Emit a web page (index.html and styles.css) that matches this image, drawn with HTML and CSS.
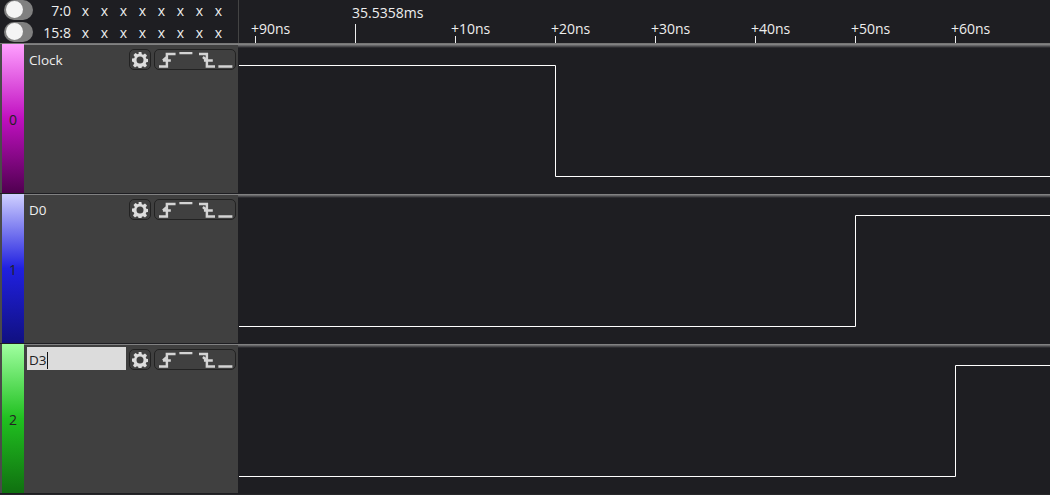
FILE: index.html
```html
<!DOCTYPE html>
<html lang="en">
<head>
  <meta charset="UTF-8">
  <title>Logic analyzer</title>
  <link rel="stylesheet" href="styles.css">
</head>
<body>
  <svg class="defs">
    <defs>
      <symbol id="gear" viewBox="0 0 16 16">
        <path fill-rule="evenodd" d="M6.600 0h2.800l.4 2.200 1.300.6 1.900-1.300 2 2-1.300 1.900.6 1.300 2.200.4v2.800l-2.200.4-.6 1.300 1.300 1.900-2 2-1.900-1.300-1.300.6-.4 2.200H6.600l-.4-2.200-1.300-.6-1.900 1.300-2-2 1.300-1.900-.6-1.300L0 9.400V6.600l2.200-.4.6-1.300L1.500 3l2-2 1.900 1.300 1.300-.6zM8 4.500a3.500 3.500 0 1 0 0 7 3.500 3.500 0 0 0 0-7z"/>
      </symbol>
      <symbol id="rise" viewBox="0 0 17 16">
        <path d="M0 14.500h8V2h9M4 8.500h8M4 8.500l4-3.500"/>
      </symbol>
      <symbol id="high" viewBox="0 0 16 16">
        <path d="M0 1h13"/>
      </symbol>
      <symbol id="fall" viewBox="0 0 17 16">
        <path d="M0 2h8v12.500h9M5 8.500h9M4 5l4 3.500"/>
      </symbol>
      <symbol id="low" viewBox="0 0 16 16">
        <path d="M0 14.500h14"/>
      </symbol>
    </defs>
  </svg>

  <header class="top">
    <div class="bytes">
      <div class="byte-row">
        <span class="toggle"></span>
        <span class="byte-name">7:0</span>
        <span class="bits"><i>x</i><i>x</i><i>x</i><i>x</i><i>x</i><i>x</i><i>x</i><i>x</i></span>
      </div>
      <div class="byte-row">
        <span class="toggle"></span>
        <span class="byte-name">15:8</span>
        <span class="bits"><i>x</i><i>x</i><i>x</i><i>x</i><i>x</i><i>x</i><i>x</i><i>x</i></span>
      </div>
    </div>
    <div class="ruler">
      <div class="tick"><span>+90ns</span></div>
      <div class="tick major"><span>35.5358ms</span></div>
      <div class="tick"><span>+10ns</span></div>
      <div class="tick"><span>+20ns</span></div>
      <div class="tick"><span>+30ns</span></div>
      <div class="tick"><span>+40ns</span></div>
      <div class="tick"><span>+50ns</span></div>
      <div class="tick"><span>+60ns</span></div>
    </div>
  </header>

  <section class="track">
    <div class="strip pink">0</div>
    <div class="info">
      <div class="name">Clock</div>
      <div class="btn gear"><svg><use href="#gear"/></svg></div>
      <div class="btn edges">
        <svg><use href="#rise"/></svg><svg><use href="#high"/></svg><svg><use href="#fall"/></svg><svg><use href="#low"/></svg>
      </div>
    </div>
    <svg class="wave" viewBox="0 0 811 147"><path d="M0 18.500H316.500V129.500H811"/></svg>
  </section>

  <section class="track">
    <div class="strip blue">1</div>
    <div class="info">
      <div class="name">D0</div>
      <div class="btn gear"><svg><use href="#gear"/></svg></div>
      <div class="btn edges">
        <svg><use href="#rise"/></svg><svg><use href="#high"/></svg><svg><use href="#fall"/></svg><svg><use href="#low"/></svg>
      </div>
    </div>
    <svg class="wave" viewBox="0 0 811 147"><path d="M0 129.500H616.500V18.500H811"/></svg>
  </section>

  <section class="track">
    <div class="strip green">2</div>
    <div class="info">
      <div class="name editing">D3<b class="caret"></b></div>
      <div class="btn gear"><svg><use href="#gear"/></svg></div>
      <div class="btn edges">
        <svg><use href="#rise"/></svg><svg><use href="#high"/></svg><svg><use href="#fall"/></svg><svg><use href="#low"/></svg>
      </div>
    </div>
    <svg class="wave" viewBox="0 0 811 147"><path d="M0 129.500H716.500V18.500H811"/></svg>
  </section>
</body>
</html>
```

FILE: styles.css
```css
html, body {
  margin: 0;
  height: 100%;
  overflow: hidden;
}

body {
  background-color: #27272a;
  color: #eee;
  font-family: "Open Sans", sans-serif;
  font-size: 14px;
}

.defs {
  display: none;
}

.top {
  display: flex;
  box-sizing: border-box;
  height: 44px;
  border-bottom: 1px solid #777;
  background-color: #1e1e22;
}

.bytes {
  flex: none;
  display: flex;
  flex-direction: column;
  gap: 2px;
  width: 234px;
  padding-left: 4px;
  border-right: 1px solid #444;
}

.byte-row {
  display: flex;
  align-items: center;
  height: 20px;
}

.toggle {
  position: relative;
  width: 29px;
  height: 20px;
  border-radius: 10px;
  background-color: #808080;
}

.toggle::after {
  content: "";
  position: absolute;
  left: 2px;
  top: 1px;
  width: 17px;
  height: 17px;
  border-radius: 50%;
  background-color: #f4f4f4;
}

.byte-name {
  width: 38px;
  text-align: right;
}

.bits {
  display: flex;
  margin-left: 5px;
}

.bits i {
  width: 19px;
  text-align: center;
  font-style: normal;
}

.ruler {
  display: flex;
  padding-left: 16px;
  overflow: hidden;
}

.tick {
  position: relative;
  flex: none;
  width: 100px;
  box-sizing: border-box;
  border-left: 1px solid #eee;
  height: 7px;
  margin-top: 36px;
}

.tick span {
  position: absolute;
  left: -5px;
  bottom: 5px;
  white-space: nowrap;
}

.tick.major {
  height: 19px;
  margin-top: 24px;
}

.tick.major span {
  left: -4px;
  bottom: 21px;
}

.track {
  display: flex;
  height: 150px;
  background: #1e1e22 linear-gradient(#909090, #1e1e22 4px) no-repeat;
}

.strip {
  flex: none;
  display: flex;
  align-items: center;
  justify-content: center;
  width: 22px;
  padding-top: 2px;
  box-sizing: content-box;
  margin-bottom: 1px;
  border-left: 2px solid #4a4a4a;
  color: #222;
}

.pink { background: linear-gradient(#ffa0ff, #c010c0 50%, #500050); }
.blue { background: linear-gradient(#d0d0ff, #2020e0 50%, #101080); }
.green { background: linear-gradient(#a0ffa0, #20c020 50%, #107010); }

.info {
  flex: none;
  display: flex;
  align-items: flex-start;
  width: 214px;
  margin: 1px 0;
  background-color: #404040;
}

.name {
  flex: none;
  width: 99px;
  height: 23px;
  margin: 2px 3px 0;
  padding: 3px 0 0 2px;
  box-sizing: border-box;
  font-size: 13.5px;
  line-height: 20px;
}

.editing {
  background-color: #dcdcdc;
  color: #222;
}

.caret {
  display: inline-block;
  width: 1px;
  height: 17px;
  vertical-align: -4px;
  background-color: #111;
}

.btn {
  display: flex;
  align-items: center;
  height: 19px;
  margin-top: 4px;
  border: 1px solid #222;
  border-radius: 5px;
  background-color: #404040;
}

.gear {
  justify-content: center;
  width: 20px;
  fill: #ddd;
}

.gear svg {
  width: 16px;
  height: 16px;
}

.edges {
  width: 76px;
  padding-left: 4px;
  margin-left: 3px;
  gap: 3px;
  fill: none;
  stroke: #d4d4d4;
  stroke-width: 2.5;
}

.edges svg {
  width: 17px;
  height: 16px;
}

.wave {
  flex: 1;
  min-width: 0;
  height: 147px;
  margin: 3px 0 0 1px;
  fill: none;
  stroke: #fff;
  stroke-width: 1;
}
```
